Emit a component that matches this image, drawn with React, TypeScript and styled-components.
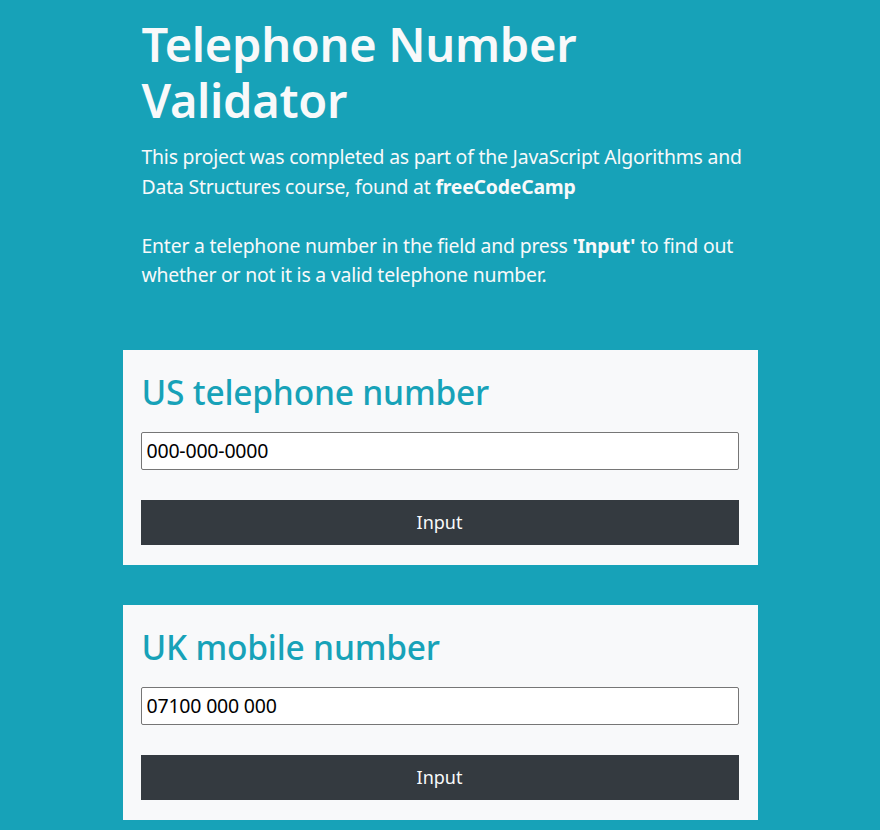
import React from 'react'
import styled, { createGlobalStyle } from 'styled-components'

const FONT = `'Noto Sans', 'Open Sans', sans-serif`

const GlobalStyle = createGlobalStyle`
  html, body {
    margin: 0;
    padding: 0;
    background-color: #17a2b8;
    font-family: ${FONT};
  }
`

const Page = styled.main`
  width: 635px;
  margin: 0 auto;
  padding: 16px 0 12px;
  display: flex;
  flex-direction: column;
`

const Header = styled.header`
  padding: 0 8px 0 19px;
  color: #f8f9fa;
  margin-bottom: 60px;
`

const Title = styled.h1`
  font-size: 47px;
  font-weight: 600;
  line-height: 56px;
  margin: 0 0 14px;
  letter-spacing: -0.3px;
`

const Lead = styled.p`
  font-size: 19.4px;
  font-weight: 400;
  line-height: 29.5px;
  margin: 0 0 29.5px;
  letter-spacing: -0.2px;

  &:last-child {
    margin-bottom: 0;
  }
`

const Card = styled.section`
  background-color: #f8f9fa;
  padding: 20px 19px 20px 18px;
  display: flex;
  flex-direction: column;

  & + & {
    margin-top: 40px;
  }
`

const CardTitle = styled.h2`
  color: #17a2b8;
  font-size: 33.5px;
  font-weight: 500;
  line-height: 44px;
  margin: 0 0 18px 1px;
  letter-spacing: -0.2px;
`

const PhoneInput = styled.input`
  box-sizing: border-box;
  width: 100%;
  height: 38px;
  margin: 0 0 30px;
  padding: 0 5px;
  border: 1px solid #767676;
  border-radius: 2px;
  background: #fff;
  color: #000;
  font-family: ${FONT};
  font-size: 19.5px;
  letter-spacing: -0.2px;
  outline: none;
`

const SubmitButton = styled.button`
  height: 45px;
  width: 100%;
  border: none;
  border-radius: 0;
  background-color: #343a40;
  color: #f8f9fa;
  font-family: ${FONT};
  font-size: 18px;
  cursor: pointer;
`

interface ValidatorCardProps {
  title: string
  placeholder: string
}

function ValidatorCard({ title, placeholder }: ValidatorCardProps) {
  return (
    <Card>
      <CardTitle>{title}</CardTitle>
      <PhoneInput type="text" defaultValue={placeholder} />
      <SubmitButton type="button">Input</SubmitButton>
    </Card>
  )
}

export default function App() {
  return (
    <>
      <GlobalStyle />
      <Page>
        <Header>
          <Title>
            Telephone Number
            <br />
            Validator
          </Title>
          <Lead>
            This project was completed as part of the JavaScript Algorithms and Data Structures course, found at{' '}
            <strong>freeCodeCamp</strong>
          </Lead>
          <Lead>
            Enter a telephone number in the field and press <strong>'Input'</strong> to find out whether or not it is a
            valid telephone number.
          </Lead>
        </Header>
        <ValidatorCard title="US telephone number" placeholder="000-000-0000" />
        <ValidatorCard title="UK mobile number" placeholder="07100 000 000" />
      </Page>
    </>
  )
}
